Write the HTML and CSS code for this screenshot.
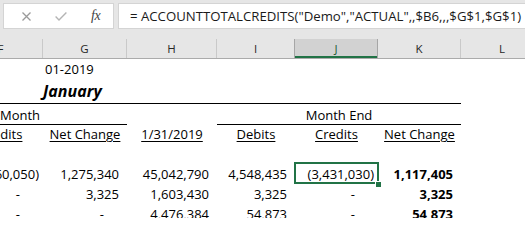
FILE: index.html
```html
<!DOCTYPE html>
<html>
<head>
<meta charset="utf-8">
<link rel="stylesheet" href="styles.css">
</head>
<body>
<div class="toolbar">
  <div class="btns">
    <span class="ico ico-x"><svg width="9" height="9" viewBox="0 0 9 9"><path d="M0.5 0.5L8.5 8.5M8.5 0.5L0.5 8.5" stroke="#9a9a9a" stroke-width="1.3" fill="none"/></svg></span>
    <span class="ico ico-ok"><svg width="12" height="9" viewBox="0 0 12 9"><path d="M0.6 4.6L4 8L11.4 0.6" stroke="#b4b4b4" stroke-width="1.4" fill="none"/></svg></span>
    <span class="fx">fx</span>
  </div>
  <div class="formula">= ACCOUNTTOTALCREDITS("Demo","ACTUAL",,$B6,,,$G$1,$G$1)</div>
</div>
<div class="sheet">
  <div class="row hdr">
    <div class="h">F</div>
    <div class="h">G</div>
    <div class="h">H</div>
    <div class="h">I</div>
    <div class="h sel">J</div>
    <div class="h">K</div>
    <div class="h">L</div>
  </div>
  <div class="row r1">
    <div class="c"></div>
    <div class="c l">01-2019</div>
    <div class="c"></div><div class="c"></div><div class="c"></div><div class="c"></div><div class="c"></div>
  </div>
  <div class="row r2">
    <div class="c bb"></div>
    <div class="c l bb title">January</div>
    <div class="c bb"></div><div class="c bb"></div><div class="c bb"></div><div class="c bb"></div><div class="c"></div>
  </div>
  <div class="row r3">
    <div class="c bb month">Month</div>
    <div class="c bb"></div>
    <div class="c"></div>
    <div class="c bb ctr span3">Month End</div>
    <div class="c"></div>
  </div>
  <div class="row r4">
    <div class="c ctr"><u>Credits</u></div>
    <div class="c ctr"><u>Net Change</u></div>
    <div class="c ctr"><u>1/31/2019</u></div>
    <div class="c ctr"><u>Debits</u></div>
    <div class="c ctr"><u>Credits</u></div>
    <div class="c ctr"><u>Net Change</u></div>
    <div class="c"></div>
  </div>
  <div class="row r5">
    <div class="c"></div>
  </div>
  <div class="row r6">
    <div class="c num neg">(4,460,050)</div>
    <div class="c num">1,275,340</div>
    <div class="c num">45,042,790</div>
    <div class="c num">4,548,435</div>
    <div class="c num neg active">(3,431,030)<span class="selbox"></span><span class="handle"></span></div>
    <div class="c num bold">1,117,405</div>
    <div class="c"></div>
  </div>
  <div class="row r7">
    <div class="c num dash">-</div>
    <div class="c num">3,325</div>
    <div class="c num">1,603,430</div>
    <div class="c num">3,325</div>
    <div class="c num dash">-</div>
    <div class="c num bold">3,325</div>
    <div class="c"></div>
  </div>
  <div class="row r8">
    <div class="c num dash">-</div>
    <div class="c num dash">-</div>
    <div class="c num">4,476,384</div>
    <div class="c num">54,873</div>
    <div class="c num dash">-</div>
    <div class="c num bold">54,873</div>
    <div class="c"></div>
  </div>
</div>
</body>
</html>
```

FILE: styles.css
```css
html, body {
  margin: 0;
  padding: 0;
}
body {
  width: 525px;
  height: 218px;
  overflow: hidden;
  background: #ffffff;
  font-family: "Open Sans", "Liberation Sans", sans-serif;
  color: #000;
}
.toolbar {
  height: 39px;
  box-sizing: border-box;
  background: #e6e6e6;
  display: flex;
  align-items: flex-start;
  padding: 3px 0 0 3px;
  gap: 4px;
}
.btns {
  width: 111px;
  height: 26px;
  box-sizing: border-box;
  background: #fff;
  border: 1px solid #d4d4d4;
  display: flex;
  align-items: center;
  padding-left: 18px;
}
.ico {
  display: flex;
  align-items: center;
}
.ico-x { margin-top: 1px; }
.ico-ok { margin-left: 24px; margin-top: 1px; }
.fx {
  margin-left: 24px;
  font-family: "Liberation Serif", serif;
  font-style: italic;
  font-size: 14px;
  color: #444;
  letter-spacing: -0.5px;
  line-height: 1;
}
.formula {
  flex: 1;
  min-width: 0;
  height: 26px;
  box-sizing: border-box;
  background: #fff;
  border: 1px solid #d4d4d4;
  border-right: none;
  padding-left: 11px;
  font-size: 13.2px;
  line-height: 25px;
  color: #1a1a1a;
  white-space: nowrap;
  overflow: hidden;
}
.sheet {
  margin-left: -41px;
  width: 585px;
}
.row {
  display: grid;
  grid-template-columns: 84px 84px 90px 78px 83px 83px 83px;
}
.hdr {
  height: 20px;
  box-sizing: border-box;
  background: #e6e6e6;
  border-bottom: 1px solid #ababab;
}
.h {
  font-size: 11.5px;
  line-height: 19px;
  text-align: center;
  color: #262626;
  border-right: 1px solid #c9c9c9;
  box-sizing: border-box;
}
.h.sel {
  background: #d2d2d2;
  color: #1d5a36;
  border-left: 1px solid #a6a6a6;
  border-right: 1px solid #a6a6a6;
  margin-left: -1px;
  box-shadow: inset 0 -2px 0 #217346;
}
.c {
  font-size: 13px;
  line-height: 18px;
  display: flex;
  align-items: flex-end;
  white-space: nowrap;
  box-sizing: border-box;
  min-width: 0;
}
.l { padding-left: 2px; }
.ctr { justify-content: center; }
.span3 { grid-column: span 3; }
.bb { border-bottom: 1px solid #000; }
.r1 { height: 19px; }
.r2 { height: 26px; }
.r3 { height: 21px; }
.r4 { height: 18px; }
.r5 { height: 20px; }
.r6, .r7, .r8 { height: 20px; }
.title {
  font-size: 16px;
  font-weight: bold;
  font-style: italic;
  padding-bottom: 3px;
  padding-left: 0;
}
.month { padding-left: 41px; }
u {
  text-decoration: underline;
  text-decoration-thickness: 1px;
  text-underline-offset: 2px;
}
.num {
  justify-content: flex-end;
  padding-right: 8px;
}
.num.neg { padding-right: 4px; }
.num.dash { padding-right: 23px; }
.bold { font-weight: bold; }
.r6 .c:first-child { overflow: hidden; }
.active { position: relative; }
.selbox {
  position: absolute;
  left: -1px;
  top: -1px;
  right: -1px;
  bottom: -1px;
  border: 2px solid #217346;
}
.handle {
  position: absolute;
  right: -3px;
  bottom: -4px;
  width: 5px;
  height: 5px;
  background: #217346;
  border-left: 1px solid #fff;
  border-top: 1px solid #fff;
}
```
